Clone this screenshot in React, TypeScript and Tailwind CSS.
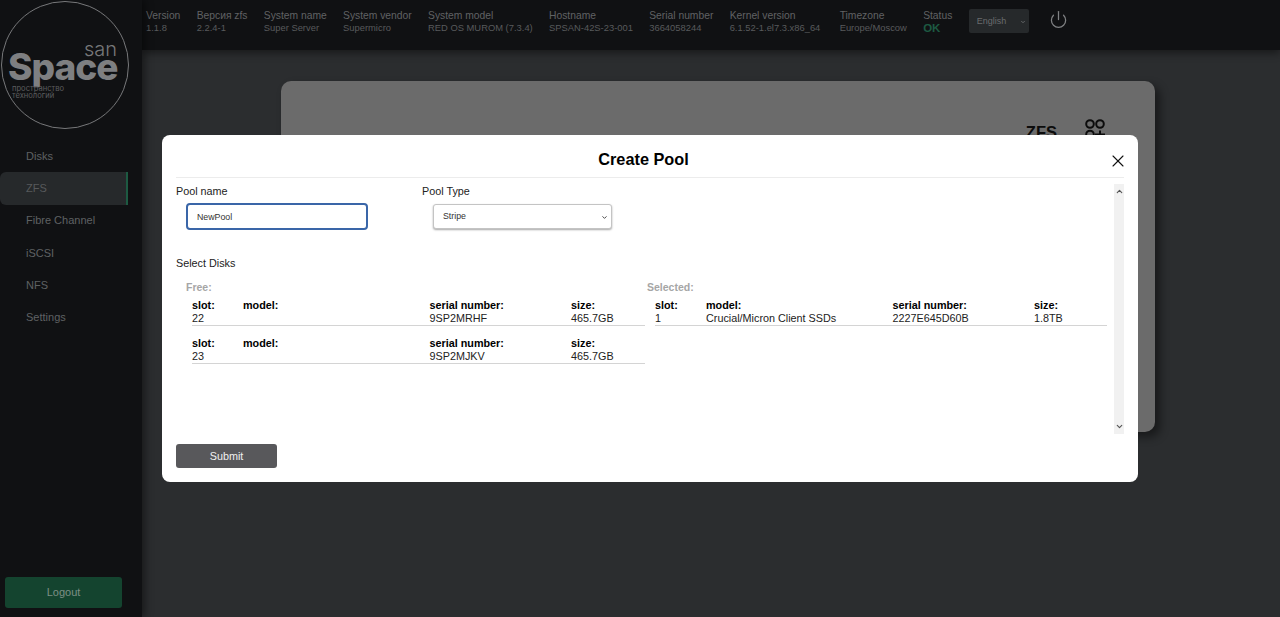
import React from "react";
import { Power, X, ChevronUp, ChevronDown } from "lucide-react";

const sysInfo = [
  { label: "Version", value: "1.1.8" },
  { label: "Версия zfs", value: "2.2.4-1" },
  { label: "System name", value: "Super Server" },
  { label: "System vendor", value: "Supermicro" },
  { label: "System model", value: "RED OS MUROM (7.3.4)" },
  { label: "Hostname", value: "SPSAN-42S-23-001" },
  { label: "Serial number", value: "3664058244" },
  { label: "Kernel version", value: "6.1.52-1.el7.3.x86_64" },
  { label: "Timezone", value: "Europe/Moscow" },
];

const navItems = ["Disks", "ZFS", "Fibre Channel", "iSCSI", "NFS", "Settings"];

const freeDisks = [
  { slot: "22", model: "", serial: "9SP2MRHF", size: "465.7GB" },
  { slot: "23", model: "", serial: "9SP2MJKV", size: "465.7GB" },
];
const selectedDisks = [
  { slot: "1", model: "Crucial/Micron Client SSDs", serial: "2227E645D60B", size: "1.8TB" },
];

type Disk = { slot: string; model: string; serial: string; size: string };

const DiskRow = ({ disk }: { disk: Disk }) => (
  <div className="mb-[10.5px] grid h-[27px] grid-cols-[51px_186.5px_141.5px_1fr] border-b border-[#d4d4d4] text-[10.8px] leading-[13px] text-[#222]">
    <div>
      <p className="font-bold text-black">slot:</p>
      <p>{disk.slot}</p>
    </div>
    <div>
      <p className="font-bold text-black">model:</p>
      <p>{disk.model}</p>
    </div>
    <div>
      <p className="font-bold text-black">serial number:</p>
      <p>{disk.serial}</p>
    </div>
    <div>
      <p className="font-bold text-black">size:</p>
      <p>{disk.size}</p>
    </div>
  </div>
);

export default function App() {
  return (
    <div className="relative flex h-[617px] w-[1280px] overflow-hidden bg-[#2b2d2f] font-['Liberation_Sans',Arial,sans-serif]">
      {/* Sidebar */}
      <aside className="relative z-10 flex w-[142px] shrink-0 flex-col bg-[#101113] shadow-[3px_0_8px_rgba(0,0,0,0.45)]">
        <div className="ml-px mt-[1px] flex h-[128px] w-[128px] flex-col rounded-full border border-[#77787a] px-[6px] pt-[40px] font-['Inter',sans-serif] text-[#77787a]">
          <span className="self-end pr-[5px] text-[20px] font-light leading-[14px]">san</span>
          <span className="-mt-[5px] text-[37px] font-extrabold leading-[32px] tracking-[-1px] text-[#7e7f81]">Space</span>
          <span className="mt-[2px] pl-[4px] text-[7.6px] leading-[7px] text-[#5c5d5f]">
            пространство<br />технологий
          </span>
        </div>
        <nav className="mt-[11px] pr-[14px]">
          {navItems.map((item) => (
            <div
              key={item}
              className={
                item === "ZFS"
                  ? "flex h-[32.3px] items-center rounded-l-md border-r-2 border-[#1d5a42] bg-[#26292b] pl-[26px] text-[11px] text-[#57595b]"
                  : "flex h-[32.3px] items-center pl-[26px] text-[11px] text-[#5f6163]"
              }
            >
              {item}
            </div>
          ))}
        </nav>
        <button className="mb-[9px] ml-[5px] mt-auto h-[31px] w-[117px] rounded-[3px] bg-[#14442f] text-[11px] text-[#7d8f85]">
          Logout
        </button>
      </aside>

      <div className="flex min-w-0 flex-1 flex-col">
        {/* Top bar */}
        <header className="relative z-[5] flex h-[50px] shrink-0 items-start gap-[16.3px] bg-[#101113] pl-[4px] pt-[10px] text-[10.3px] leading-[12px] shadow-[0_3px_8px_rgba(0,0,0,0.45)]">
          {sysInfo.map((info) => (
            <div
              key={info.label}
              className={info.label === "Kernel version" ? "mr-[3px] whitespace-nowrap" : "whitespace-nowrap"}
            >
              <p className="text-[#606264]">{info.label}</p>
              <p className="text-[9.4px] text-[#585a5c]">{info.value}</p>
            </div>
          ))}
          <div className="whitespace-nowrap">
            <p className="text-[#606264]">Status</p>
            <p className="text-[11.5px] font-bold text-[#1d5a42]">OK</p>
          </div>
          <div className="relative -mt-[1px]">
            <select className="h-[24px] w-[60px] appearance-none rounded-[2px] bg-[#26292b] pl-[8px] text-[9px] text-[#6a6c6e]">
              <option>English</option>
            </select>
            <ChevronDown className="absolute right-[3px] top-[10px] h-[6px] w-[6px] text-[#77797b]" strokeWidth={3} />
          </div>
          <Power className="ml-[4px] h-[19px] w-[19px] text-[#808284]" strokeWidth={1.6} />
        </header>

        {/* Page content, dimmed behind the dialog */}
        <main className="flex-1 pl-[139px] pt-[31px]">
          <div className="flex h-[351px] w-[874px] items-start justify-end gap-[28px] rounded-[10px] bg-[#6b6b6b] pr-[50px] pt-[38px] shadow-[5px_5px_10px_rgba(0,0,0,0.45)]">
            <span className="mt-[1px] text-[16.5px] font-bold text-[#0c0c0c]">ZFS</span>
            <svg width="20" height="30" viewBox="0 0 20 30" fill="none" stroke="#0c0c0c" strokeWidth="2">
              <circle cx="5" cy="5" r="3.8" />
              <circle cx="15" cy="5" r="3.8" />
              <circle cx="5" cy="15.5" r="3.8" />
              <path d="M15 11.5v8M10 15.5h10" />
            </svg>
          </div>
        </main>
      </div>

      {/* Create Pool dialog */}
      <div className="absolute left-[162px] top-[135px] z-20 flex h-[347px] w-[976px] flex-col rounded-[8px] bg-white px-[14px] text-[#222]">
        <div className="relative flex h-[43px] shrink-0 items-center justify-center border-b border-[#ececec] pr-[13px]">
          <h2 className="pt-[7px] text-[16.3px] font-bold text-black">Create Pool</h2>
          <X className="absolute right-[-4px] top-[16px] h-[20px] w-[20px] text-[#111]" strokeWidth={1.3} />
        </div>

        <div className="mt-[6px] flex h-[250px] shrink-0">
          <div className="flex min-w-0 flex-1 flex-col">
            <div className="flex">
              <div className="w-[246px]">
                <label className="mt-[1px] block text-[10.8px] leading-[13px]">Pool name</label>
                <input
                  defaultValue="NewPool"
                  className="ml-[10px] mt-[5px] h-[27px] w-[182px] rounded-[4px] border-2 border-[#3a66a8] pl-[9px] text-[8.8px] text-[#333] outline-none"
                />
              </div>
              <div className="relative">
                <label className="mt-[1px] block text-[10.8px] leading-[13px]">Pool Type</label>
                <select className="ml-[11px] mt-[6px] h-[25px] w-[179px] appearance-none rounded-[3px] border border-[#c4c4c4] bg-white pl-[9px] text-[8.8px] text-[#333] shadow-[0_1px_2px_rgba(0,0,0,0.35)]">
                  <option>Stripe</option>
                </select>
                <ChevronDown className="absolute right-[4px] top-[30px] h-[7px] w-[7px] text-[#333]" strokeWidth={3} />
              </div>
            </div>
            <p className="mt-[27px] text-[10.8px] leading-[13px]">Select Disks</p>

            <div className="mt-[11px] flex">
              <div className="w-[471px] pl-[10px] pr-[2px]">
                <p className="text-[10.5px] font-bold leading-[12px] text-[#a6a6a6]">Free:</p>
                <div className="ml-[6px] mt-[6px]">
                  {freeDisks.map((disk) => (
                    <DiskRow key={disk.slot} disk={disk} />
                  ))}
                </div>
              </div>
              <div className="w-[460px]">
                <p className="text-[10.5px] font-bold leading-[12px] text-[#a6a6a6]">Selected:</p>
                <div className="ml-[8px] mt-[6px]">
                  {selectedDisks.map((disk) => (
                    <DiskRow key={disk.slot} disk={disk} />
                  ))}
                </div>
              </div>
            </div>
          </div>

          {/* Scrollbar */}
          <div className="flex w-[10px] shrink-0 flex-col items-center justify-between bg-[#f1f1f1] py-[3px] text-[#555]">
            <ChevronUp className="h-[9px] w-[9px]" strokeWidth={3} />
            <ChevronDown className="h-[9px] w-[9px]" strokeWidth={3} />
          </div>
        </div>

        <button className="mt-[10px] h-[24px] w-[101px] rounded-[3px] bg-[#58585b] text-[10.8px] text-[#f0f0f0]">
          Submit
        </button>
      </div>
    </div>
  );
}
